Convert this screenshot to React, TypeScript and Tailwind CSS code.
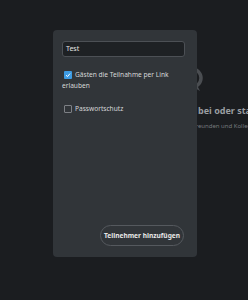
import React from 'react'

const font = { fontFamily: '"Noto Sans", "Open Sans", sans-serif' }

function TalkIcon() {
  return (
    <svg width="30" height="30" viewBox="0 0 30 30" fill="none">
      <circle cx="14" cy="13" r="9" stroke="#4a4d51" strokeWidth="3.5" />
      <path d="M19 20 L22 26 L16 22.5 Z" fill="#4a4d51" />
    </svg>
  )
}

export default function App() {
  return (
    <div className="relative w-[248px] h-[300px] overflow-hidden bg-[#1b1d20]" style={font}>
      {/* empty content behind the dialog */}
      <div className="w-[398px] flex flex-col items-center pt-[65px]">
        <div className="mr-[12px]">
          <TalkIcon />
        </div>
        <p className="mt-[10px] text-[9px] leading-[12px] font-bold text-[#9a9da1] whitespace-nowrap">
          Tritt einer Unterhaltung bei oder starte eine neue
        </p>
        <p className="mt-[4px] mr-[6px] text-[6px] leading-[10px] text-[#777a7e] whitespace-nowrap">
          Sage Hallo zu deinen Freunden und Kollegen!
        </p>
      </div>

      {/* dialog */}
      <div className="absolute left-[53px] top-[30px] w-[144px] h-[227px] rounded-[4px] bg-[#313539] flex flex-col pl-[9px] pr-[12px] pt-[11px] pb-[11px]">
        <div className="w-[123px] h-[16px] rounded-[3px] border border-[#4c5055] bg-[#1e2124] flex items-center pl-[3px] text-[7px] text-[#e4e4e4]">
          Test
        </div>

        <p className="mt-[12px] text-[6.6px] leading-[11px] text-[#d6d7d8]">
          <span className="inline-flex w-[8px] h-[8px] ml-[2px] mr-[3px] align-[-1px] rounded-[1px] bg-[#3d9be3] items-center justify-center">
            <svg width="6" height="6" viewBox="0 0 6 6" fill="none">
              <path d="M1 3.2 L2.5 4.6 L5 1.6" stroke="#fff" strokeWidth="1" />
            </svg>
          </span>
          Gästen die Teilnahme per Link erlauben
        </p>

        <div className="mt-[12px] flex items-center text-[6.6px] leading-[11px] text-[#d6d7d8]">
          <span className="w-[8px] h-[8px] ml-[2px] mr-[3px] rounded-[1px] border border-[#7d8085]" />
          Passwortschutz
        </div>

        <div className="flex-1" />

        <button className="self-end mr-[1px] w-[84px] h-[21px] rounded-full border border-[#55595e] text-[6.6px] font-bold text-[#e6e6e6]">
          Teilnehmer hinzufügen
        </button>
      </div>
    </div>
  )
}
